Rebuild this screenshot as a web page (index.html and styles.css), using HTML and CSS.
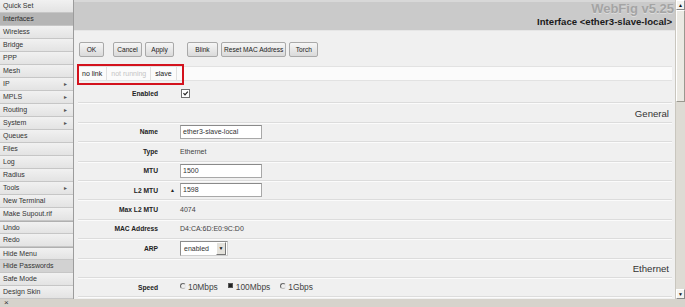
FILE: index.html
```html
<!DOCTYPE html>
<html lang="en">
<head>
    <meta charset="UTF-8">
    <title>WebFig - Interface ether3-slave-local</title>
    <link rel="stylesheet" href="styles.css">
</head>
<body>
    <div class="app">
        <nav class="menu">
            <div class="item">Quick Set</div>
            <div class="item active">Interfaces</div>
            <div class="item">Wireless</div>
            <div class="item">Bridge</div>
            <div class="item">PPP</div>
            <div class="item">Mesh</div>
            <div class="item sub">IP</div>
            <div class="item sub">MPLS</div>
            <div class="item sub">Routing</div>
            <div class="item sub">System</div>
            <div class="item">Queues</div>
            <div class="item">Files</div>
            <div class="item">Log</div>
            <div class="item">Radius</div>
            <div class="item sub">Tools</div>
            <div class="item">New Terminal</div>
            <div class="item">Make Supout.rif</div>
            <div class="item group">Undo</div>
            <div class="item">Redo</div>
            <div class="item group">Hide Menu</div>
            <div class="item hover">Hide Passwords</div>
            <div class="item">Safe Mode</div>
            <div class="item">Design Skin</div>
        </nav>

        <main class="page">
            <header class="top">
                <div class="brand">WebFig v5.25</div>
                <div class="title">Interface &lt;ether3-slave-local&gt;</div>
            </header>

            <div class="toolbar">
                <button class="btn ok">OK</button>
                <button class="btn">Cancel</button>
                <button class="btn">Apply</button>
                <button class="btn spaced">Blink</button>
                <button class="btn">Reset MAC Address</button>
                <button class="btn">Torch</button>
            </div>

            <div class="status">
                <span class="flag">no link</span>
                <span class="flag off">not running</span>
                <span class="flag">slave</span>
                <div class="mark"></div>
            </div>

            <div class="form">
                <div class="row">
                    <div class="label">Enabled</div>
                    <div></div>
                    <div class="value"><span class="check">
                        <svg width="7" height="7" viewBox="0 0 7 7"><path d="M1.5 3.2 L3 4.8 L5.8 1.6" fill="none" stroke="#222" stroke-width="1.2"/></svg>
                    </span></div>
                </div>
                <div class="row section"><span>General</span></div>
                <div class="row">
                    <div class="label">Name</div>
                    <div></div>
                    <div class="value"><span class="field">ether3-slave-local</span></div>
                </div>
                <div class="row">
                    <div class="label">Type</div>
                    <div></div>
                    <div class="value">Ethernet</div>
                </div>
                <div class="row">
                    <div class="label">MTU</div>
                    <div></div>
                    <div class="value"><span class="field">1500</span></div>
                </div>
                <div class="row">
                    <div class="label">L2 MTU</div>
                    <div class="toggle">▲</div>
                    <div class="value"><span class="field">1598</span></div>
                </div>
                <div class="row">
                    <div class="label">Max L2 MTU</div>
                    <div></div>
                    <div class="value">4074</div>
                </div>
                <div class="row">
                    <div class="label">MAC Address</div>
                    <div></div>
                    <div class="value">D4:CA:6D:E0:9C:D0</div>
                </div>
                <div class="row">
                    <div class="label">ARP</div>
                    <div></div>
                    <div class="value"><span class="select">enabled<span class="drop">▼</span></span></div>
                </div>
                <div class="row section"><span>Ethernet</span></div>
                <div class="row">
                    <div class="label">Speed</div>
                    <div></div>
                    <div class="value radios">
                        <span class="opt"><span class="radio"></span>10Mbps</span>
                        <span class="opt"><span class="radio on"></span>100Mbps</span>
                        <span class="opt"><span class="radio"></span>1Gbps</span>
                    </div>
                </div>
            </div>
        </main>

        <div class="scrollbar">
            <div class="arrow">▲</div>
            <div class="track"><div class="thumb"></div></div>
            <div class="arrow">▼</div>
        </div>
    </div>
    <footer class="bottom">×</footer>
</body>
</html>
```

FILE: styles.css
```css
body {
    margin: 0;
    width: 685px;
    height: 307px;
    overflow: hidden;
    font-family: "Liberation Sans", Arial, sans-serif;
    font-size: 7px;
    color: #333;
    background: #d6d3cc;
}

.app {
    display: grid;
    grid-template-columns: 74px 1fr 10px;
    height: 299px;
}

/* left menu */
.menu {
    background: #e4e4e4;
    border-right: 1px solid #9c9c9c;
    display: flex;
    flex-direction: column;
}

.item {
    height: 12px;
    line-height: 12px;
    padding-left: 3px;
    border-bottom: 1px solid #c6c6c6;
    background: linear-gradient(#f1f1f1, #e3e3e3);
    color: #333;
    position: relative;
    white-space: nowrap;
}

.item.sub::after {
    content: "►";
    position: absolute;
    right: 5px;
    top: 0;
    font-size: 5px;
    color: #555;
}

.item.active {
    background: #b5b5b5;
    color: #2a2a2a;
}

.item.hover {
    background: #d2d2d2;
}

.item.group {
    height: 11px;
    border-top: 1px solid #b0b0b0;
}

/* main */
.page {
    background: #f0f0f0;
    display: flex;
    flex-direction: column;
}

.top {
    height: 31px;
    box-sizing: border-box;
    background: #cacaca;
    border-top: 2px solid #d8d8d8;
    border-bottom: 1px solid #e6e6e6;
    text-align: right;
}

.brand {
    font-size: 13px;
    font-weight: bold;
    color: #a4a4a4;
    line-height: 14px;
    padding-right: 1px;
    text-shadow: 0 1px 0 #dcdcdc;
}

.title {
    font-size: 9.6px;
    font-weight: bold;
    color: #1a1a1a;
    line-height: 12px;
    padding-right: 3px;
}

.toolbar {
    display: flex;
    gap: 3px;
    padding: 11px 0 0 5px;
}

.btn {
    height: 15px;
    min-width: 29px;
    padding: 0 2px;
    font-family: "Liberation Sans", Arial, sans-serif;
    font-size: 6.6px;
    color: #222;
    background: linear-gradient(#f6f6f6, #dadada);
    border: 1px solid #a9a9a9;
    border-radius: 2px;
}

.btn.ok {
    min-width: 25px;
    margin-right: 6px;
}

.btn.spaced {
    min-width: 31px;
    margin-left: 10px;
}

.status {
    position: relative;
    display: flex;
    margin: 9px 3px 0 4px;
    height: 15px;
    box-sizing: border-box;
    background: #fbfbfb;
    border-top: 1px solid #e2e2e2;
    border-bottom: 1px solid #e2e2e2;
    align-items: center;
}

.flag {
    padding: 0 4px;
    border-right: 1px solid #e0e0e0;
    line-height: 13px;
    color: #222;
}

.flag.off {
    color: #c4c4c4;
}

.mark {
    position: absolute;
    left: -1px;
    top: -3px;
    width: 107px;
    height: 21px;
    box-sizing: border-box;
    border: 2px solid #d3121d;
}

.form {
    margin: 3px 3px 0 4px;
}

.row {
    display: grid;
    grid-template-columns: 80px 22px 1fr;
    align-items: center;
    height: 19.4px;
    box-sizing: border-box;
    border-bottom: 1px solid #dcdcdc;
    box-shadow: 0 1px 0 #fbfbfb;
}

.label {
    text-align: right;
    font-weight: bold;
    font-size: 6.7px;
    color: #222;
}

.value {
    color: #444;
}

.toggle {
    font-size: 5px;
    padding-left: 12px;
    color: #222;
}

.row.section {
    display: flex;
    justify-content: flex-end;
    align-items: flex-end;
    padding: 0 3px 3px 0;
    font-size: 9.6px;
    color: #333;
}

.check {
    display: inline-flex;
    width: 7px;
    height: 7px;
    margin-left: 1px;
    border: 1px solid #6f6f6f;
    background: #fff;
}

.field {
    display: block;
    width: 82px;
    height: 14px;
    box-sizing: border-box;
    line-height: 12px;
    padding-left: 2px;
    background: #fff;
    border: 1px solid #a8a8a8;
    border-top-color: #8a8a8a;
    color: #333;
}

.select {
    display: flex;
    align-items: center;
    justify-content: space-between;
    width: 48px;
    height: 15px;
    box-sizing: border-box;
    padding: 0 1px 0 3px;
    background: #fff;
    border: 1px solid #8c8c8c;
    border-right-color: #cfcfcf;
    border-bottom-color: #cfcfcf;
    color: #333;
}

.drop {
    width: 8px;
    height: 11px;
    line-height: 11px;
    text-align: center;
    font-size: 5px;
    background: #e4e2dc;
    border: 1px solid #fff;
    border-right-color: #777;
    border-bottom-color: #777;
    color: #111;
}

.radios {
    display: flex;
    gap: 10px;
    font-size: 8.4px;
    color: #444;
}

.opt {
    display: flex;
    align-items: center;
    gap: 2px;
}

.radio {
    width: 4px;
    height: 4px;
    border-radius: 50%;
    border: 1px solid #666;
    border-right-color: #e6e6e6;
    border-bottom-color: #bbb;
    margin-top: -3px;
}

.radio.on {
    width: 3px;
    height: 3px;
    border-radius: 0;
    border-color: #555;
    background: #222;
    margin-right: 1px;
}

/* scrollbar */
.scrollbar {
    display: flex;
    flex-direction: column;
    background: #dedbd4;
    border-left: 1px solid #c9c6be;
}

.arrow {
    height: 8px;
    line-height: 8px;
    font-size: 5px;
    text-align: center;
    background: #f4f3ef;
    border: 1px solid #fff;
    border-right-color: #888;
    border-bottom-color: #888;
    color: #111;
}

.track {
    flex: 1;
}

.thumb {
    height: 92px;
    box-sizing: border-box;
    background: #ebe9e3;
    border: 1px solid #fff;
    border-right-color: #9a9890;
    border-bottom-color: #9a9890;
}

.bottom {
    height: 8px;
    line-height: 8px;
    padding-left: 4px;
    font-size: 8px;
    color: #333;
    background: #d6d3cc;
}
```
